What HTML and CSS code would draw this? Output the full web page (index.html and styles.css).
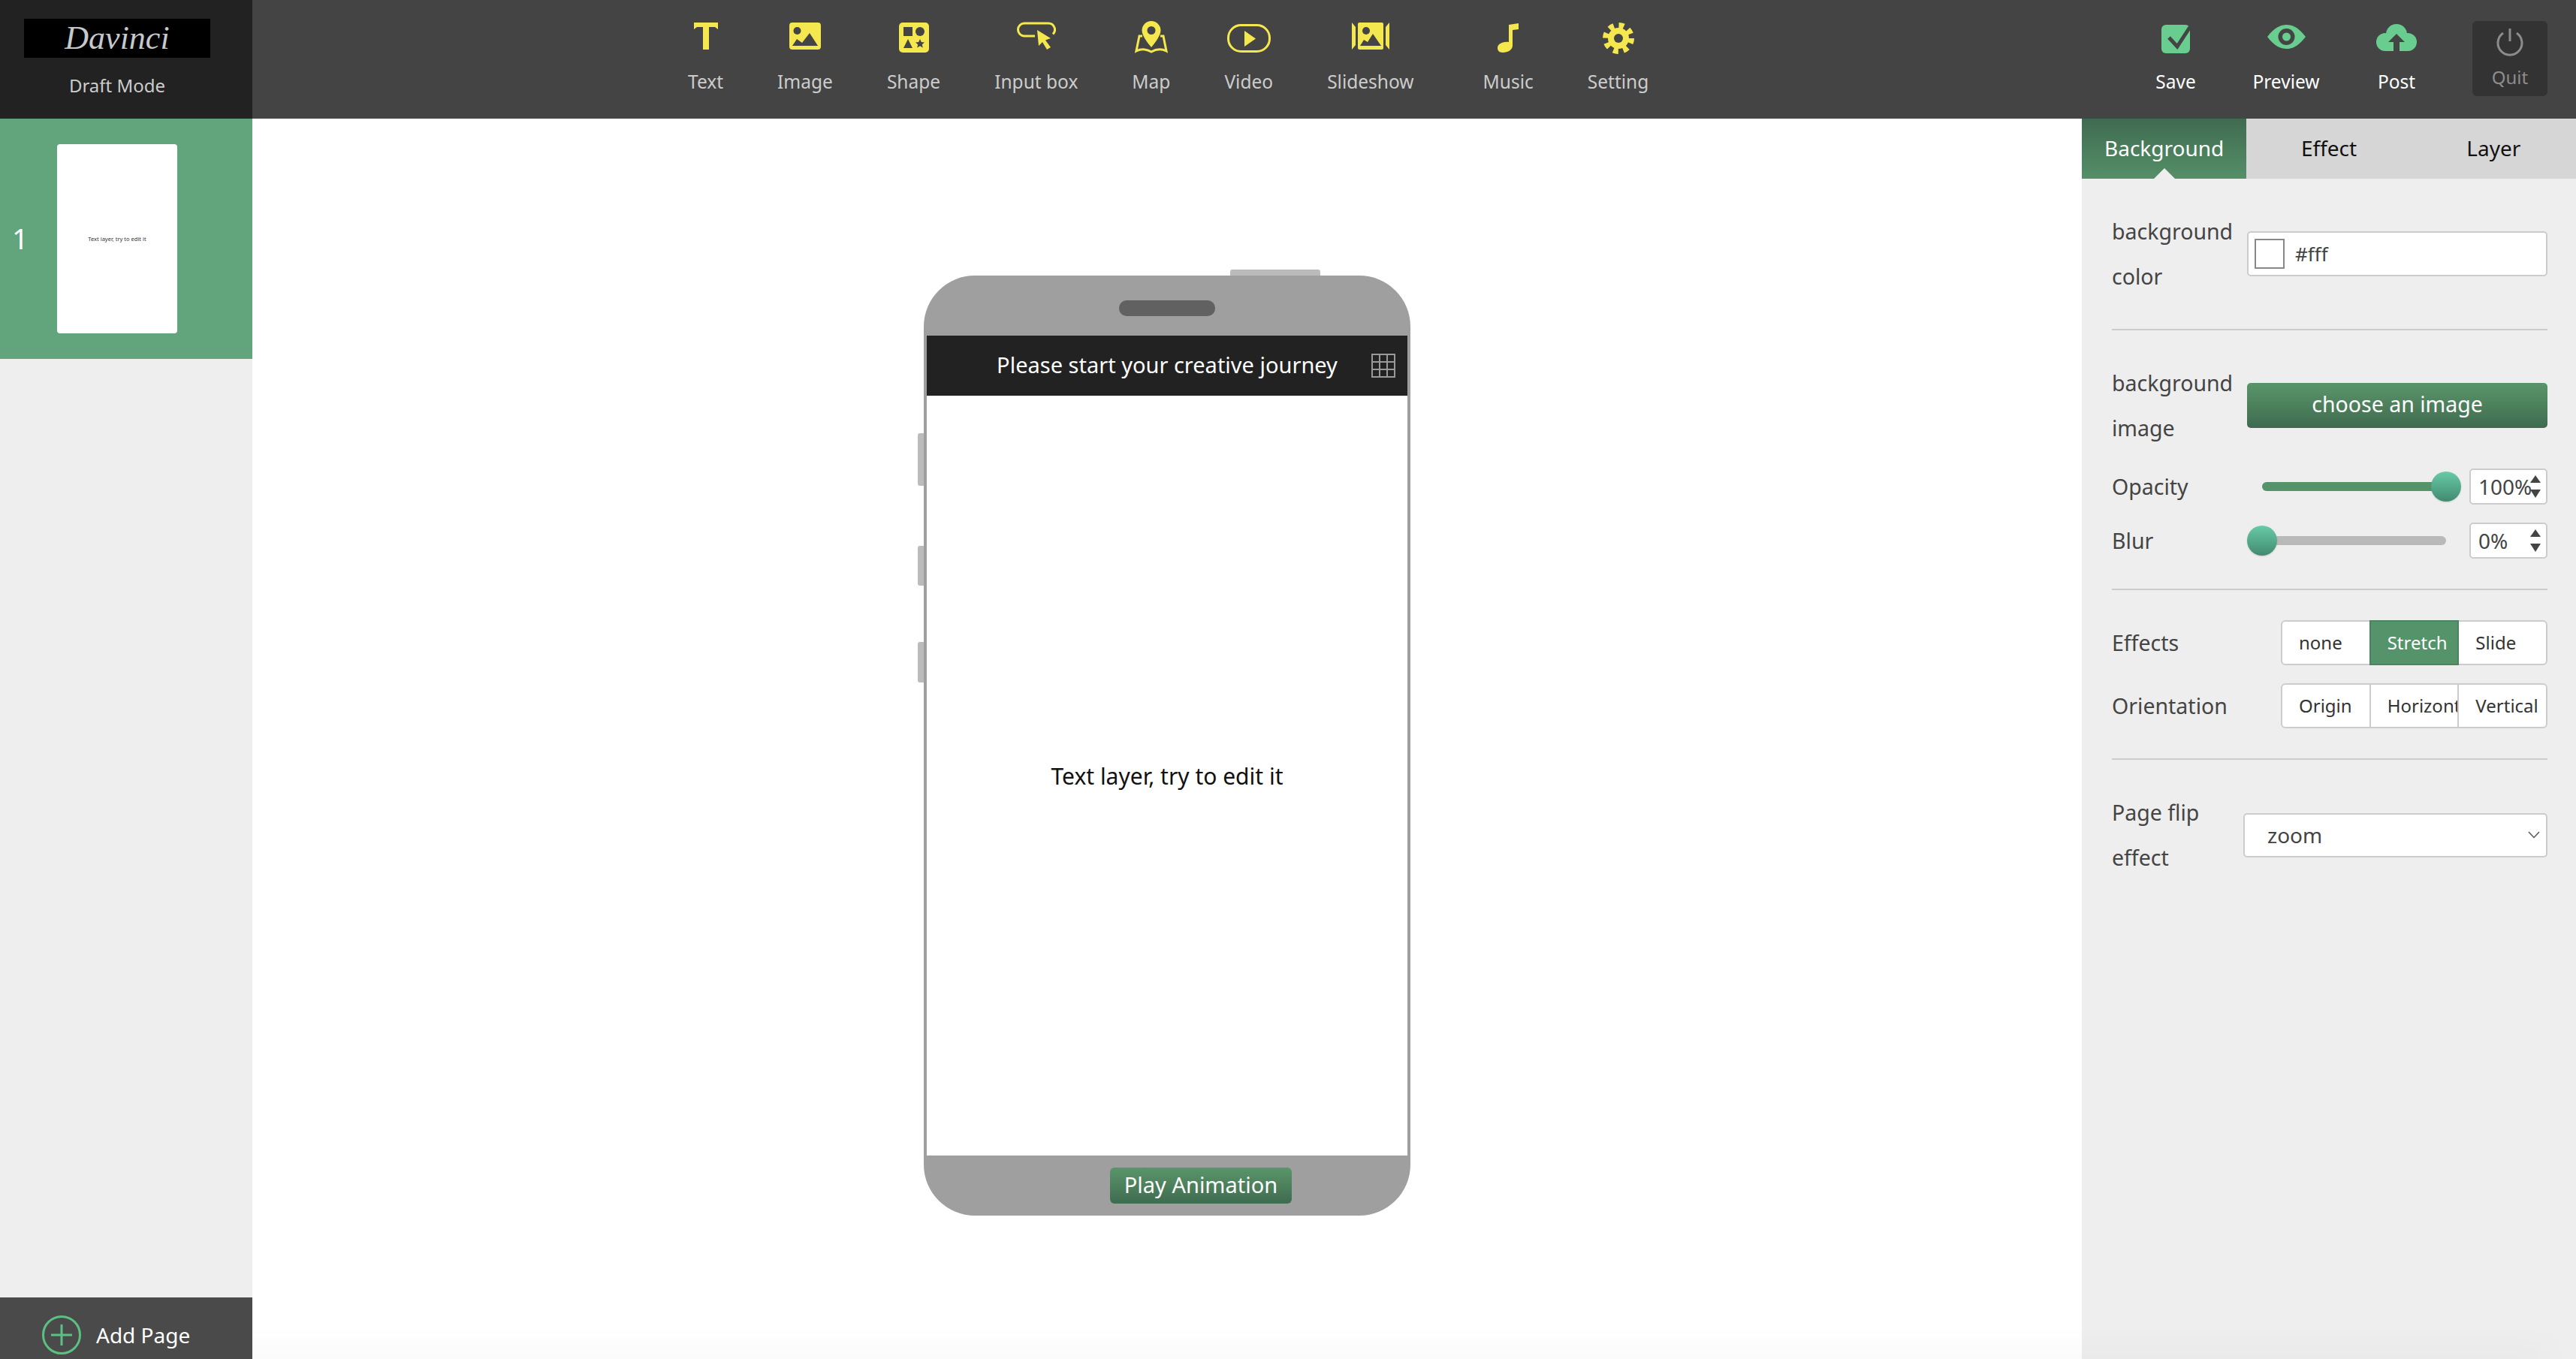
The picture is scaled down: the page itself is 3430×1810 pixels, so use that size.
FILE: index.html
```html
<!DOCTYPE html>
<html lang="en">
<head>
    <meta charset="UTF-8">
    <title>Davinci</title>
    <link rel="stylesheet" href="styles.css">
</head>
<body>
    <header class="topbar">
        <div class="brand">
            <div class="logo">Davinci</div>
            <div class="mode">Draft Mode</div>
        </div>

        <nav class="tools">
            <div class="tool">
                <svg class="icon" width="32" height="44" viewBox="0 0 32 44"><path transform="translate(0,2)" d="M0 0H32V9L28 6H20V36H12V6H4L0 9Z"/></svg>
                <span>Text</span>
            </div>
            <div class="tool">
                <svg class="icon" width="42" height="44" viewBox="0 0 42 44"><g transform="translate(0,2)"><rect width="42" height="36" rx="4"/><circle class="cut" cx="10.5" cy="11" r="5"/><path class="cut" d="M4 31L10 22L17 27L27 14L38 31Z"/></g></svg>
                <span>Image</span>
            </div>
            <div class="tool">
                <svg class="icon" width="40" height="44" viewBox="0 0 40 44"><g transform="translate(0,2)"><rect width="40" height="40" rx="5"/><rect class="cut" x="6" y="6" width="12" height="12"/><circle class="cut" cx="28" cy="12" r="6"/><path class="cut" d="M12 22L18 34H6Z"/><path class="cut" d="M28 22L29.8 26L34 26.4L30.8 29.2L31.8 33.5L28 31.2L24.2 33.5L25.2 29.2L22 26.4L26.2 26Z"/></g></svg>
                <span>Shape</span>
            </div>
            <div class="tool">
                <svg class="icon" width="52" height="44" viewBox="0 0 52 44"><g transform="translate(0,2)"><path class="line" d="M24 18H10a8.5 8.5 0 0 1 0-17H42a8.5 8.5 0 0 1 6 14.5"/><path d="M27 10L45 21L38 23.5L45 33L40 36L34 26L29 31Z"/></g></svg>
                <span>Input box</span>
            </div>
            <div class="tool">
                <svg class="icon" width="44" height="44" viewBox="0 0 44 44"><path fill-rule="evenodd" d="M22 0a12.5 12.5 0 0 1 12.5 12.5C34.500 20 26 30 22 35C18 30 9.500 20 9.500 12.500A12.500 12.500 0 0 1 22 0ZM22 7a5.500 5.500 0 1 0 0 11a5.500 5.500 0 0 0 0-11Z"/><path class="line" d="M10 20H6L2 40C8 37 15 37 22 41C29 37 36 37 42 40L38 20H34"/></svg>
                <span>Map</span>
            </div>
            <div class="tool">
                <svg class="icon" width="58" height="44" viewBox="0 0 58 44"><g transform="translate(0,4)"><rect class="line" x="1.500" y="1.500" width="55" height="35" rx="17"/><path d="M23 9L38 19.500L23 30Z"/></g></svg>
                <span>Video</span>
            </div>
            <div class="tool tool-wide">
                <svg class="icon" width="50" height="44" viewBox="0 0 50 44"><g transform="translate(0,2)"><path d="M0 0L5 6V30L0 36Z"/><path d="M50 0L45 6V30L50 36Z"/><rect x="8" width="34" height="36" rx="2"/><circle class="cut" cx="19" cy="11" r="5"/><path class="cut" d="M11 31L16 23L21 26L28 15L39 31Z"/></g></svg>
                <span>Slideshow</span>
            </div>
            <div class="tool">
                <svg class="icon" width="28" height="44" viewBox="0 0 28 44"><path transform="translate(0,2)" d="M15 3L28 1V9L20 10V31C20 36 14 40 7 40C2 40 0 37 0 34C0 29 6 25 15 26Z"/></svg>
                <span>Music</span>
            </div>
            <div class="tool">
                <svg class="icon" width="42" height="44" viewBox="0 0 42 44"><g transform="translate(0,2)"><circle class="gear-teeth" cx="21" cy="21" r="17"/><circle cx="21" cy="21" r="14"/><circle class="cut" cx="21" cy="21" r="6"/></g></svg>
                <span>Setting</span>
            </div>
        </nav>

        <div class="actions">
            <div class="action">
                <svg class="icon" width="38" height="44" viewBox="0 0 38 44"><g transform="translate(0,5)"><rect width="38" height="38" rx="6"/><path class="check" d="M10 17L21 29L38 3"/></g></svg>
                <span>Save</span>
            </div>
            <div class="action">
                <svg class="icon" width="51" height="44" viewBox="0 0 51 44"><g transform="translate(0,5)"><path d="M0 16C10 3 18 0 25.500 0S41 3 51 16C41 29 33 32 25.500 32S10 29 0 16Z"/><circle class="cut" cx="25.500" cy="16" r="11"/><circle cx="25.500" cy="16" r="5.500"/></g></svg>
                <span>Preview</span>
            </div>
            <div class="action">
                <svg class="icon" width="54" height="44" viewBox="0 0 54 44"><g transform="translate(0,4)"><circle cx="27" cy="14" r="14"/><circle cx="12" cy="24" r="12"/><circle cx="42" cy="24" r="12"/><rect x="12" y="18" width="30" height="18"/><path class="cut" d="M27 13L38 24H31V36H23V24H16Z"/></g></svg>
                <span>Post</span>
            </div>
            <div class="quit">
                <svg width="36" height="38" viewBox="0 0 36 38"><path d="M18 1V18M9 7A16 16 0 1 0 27 7" fill="none" stroke="#8c8c8c" stroke-width="3"/></svg>
                <span>Quit</span>
            </div>
        </div>
    </header>

    <div class="workspace">
        <aside class="pages">
            <div class="page-row">
                <div class="page-num">1</div>
                <div class="page-thumb">Text layer, try to edit it</div>
            </div>
            <div class="add-page">
                <svg width="52" height="52" viewBox="0 0 52 52"><circle cx="26" cy="26" r="24.500" fill="none" stroke="#5cbf84" stroke-width="3"/><path d="M12 26H40M26 12V40" stroke="#5cbf84" stroke-width="3"/></svg>
                <span>Add Page</span>
            </div>
        </aside>

        <main class="canvas">
            <div class="phone">
                <div class="side-btn side-btn-power"></div>
                <div class="side-btn side-btn-a"></div>
                <div class="side-btn side-btn-b"></div>
                <div class="side-btn side-btn-c"></div>
                <div class="phone-top"><div class="speaker"></div></div>
                <div class="phone-title">
                    Please start your creative journey
                    <svg class="grid-icon" width="32" height="32" viewBox="0 0 32 32"><path d="M1 1H31V31H1ZM11 1V31M21 1V31M1 11H31M1 21H31" fill="none" stroke="#999" stroke-width="2"/></svg>
                </div>
                <div class="phone-screen">Text layer, try to edit it</div>
                <div class="phone-bottom"><div class="play-btn">Play Animation</div></div>
            </div>
        </main>

        <aside class="panel">
            <div class="tabs">
                <div class="tab active">Background</div>
                <div class="tab">Effect</div>
                <div class="tab">Layer</div>
            </div>

            <div class="section">
                <div class="row">
                    <label class="label">background color</label>
                    <div class="color-input"><span class="swatch"></span>#fff</div>
                </div>
            </div>

            <div class="section">
                <div class="row">
                    <label class="label">background image</label>
                    <div class="choose-btn">choose an image</div>
                </div>
                <div class="slider-row">
                    <label class="label">Opacity</label>
                    <div class="slider">
                        <div class="track track-on"></div>
                        <div class="thumb thumb-end"></div>
                    </div>
                    <div class="num-input">100%<span class="spin"><i class="up"></i><i class="down"></i></span></div>
                </div>
                <div class="slider-row">
                    <label class="label">Blur</label>
                    <div class="slider">
                        <div class="track"></div>
                        <div class="thumb"></div>
                    </div>
                    <div class="num-input">0%<span class="spin"><i class="up"></i><i class="down"></i></span></div>
                </div>
            </div>

            <div class="section">
                <div class="seg-row">
                    <label class="label">Effects</label>
                    <div class="seg-group">
                        <div class="seg">none</div>
                        <div class="seg on">Stretch</div>
                        <div class="seg">Slide</div>
                    </div>
                </div>
                <div class="seg-row">
                    <label class="label">Orientation</label>
                    <div class="seg-group">
                        <div class="seg">Origin</div>
                        <div class="seg">Horizontal</div>
                        <div class="seg">Vertical</div>
                    </div>
                </div>
            </div>

            <div class="section last">
                <div class="row">
                    <label class="label label-flip">Page flip effect</label>
                    <div class="select">zoom
                        <svg width="16" height="10" viewBox="0 0 16 10"><path d="M1 1L8 8.500L15 1" fill="none" stroke="#555" stroke-width="1.500"/></svg>
                    </div>
                </div>
            </div>
        </aside>
    </div>

    <div class="bottom-shade"></div>
</body>
</html>
```

FILE: styles.css
```css
* {
    box-sizing: border-box;
}

html, body {
    height: 100%;
}

body {
    margin: 0;
    overflow: hidden;
    background: #fff;
    color: #333;
    font-family: "Noto Sans", sans-serif;
    font-size: 26px;
}

.topbar {
    display: flex;
    height: 158px;
    background: #444;
}

.brand {
    width: 336px;
    padding: 25px 56px 0 32px;
    background: #222;
    text-align: center;
}

.logo {
    height: 52px;
    background: #000;
    color: #c5c9cc;
    font-family: "Liberation Serif", serif;
    font-style: italic;
    font-size: 44px;
    line-height: 52px;
}

.mode {
    margin-top: 21px;
    color: #ccc;
    font-size: 24px;
    line-height: 32px;
}

.tools {
    display: flex;
    gap: 72px;
    padding-left: 580px;
}

.tool, .action {
    display: flex;
    flex-direction: column;
    align-items: center;
    padding-top: 28px;
    color: #ccc;
    font-size: 24.5px;
    line-height: 32px;
    white-space: nowrap;
}

.tool .icon {
    fill: #f5e74e;
}

.tool-wide {
    margin-right: 20px;
}

.icon {
    display: block;
    margin-bottom: 21px;
}

.cut {
    fill: #444;
}

.line {
    fill: none;
    stroke: #f5e74e;
    stroke-width: 3;
}

.gear-teeth {
    fill: none;
    stroke: #f5e74e;
    stroke-width: 8;
    stroke-dasharray: 6.700 6.650;
}

.actions {
    display: flex;
    gap: 47px;
    margin-left: auto;
    padding-right: 38px;
}

.action {
    width: 100px;
    color: #fff;
}

.action .icon {
    fill: #69cd90;
}

.check {
    fill: none;
    stroke: #444;
    stroke-width: 5;
}

.quit {
    display: flex;
    flex-direction: column;
    align-items: center;
    width: 100px;
    height: 100px;
    margin: 28px 0 0 4px;
    padding-top: 9px;
    border-radius: 6px;
    background: #333;
    color: #8c8c8c;
    font-size: 24px;
    line-height: 32px;
}

.quit svg {
    margin-bottom: 12px;
}

.workspace {
    display: flex;
    height: 1652px;
}

.pages {
    position: relative;
    z-index: 2;
    display: flex;
    flex-direction: column;
    justify-content: space-between;
    width: 336px;
    background: #eee;
}

.page-row {
    display: grid;
    grid-template-columns: 76px 160px;
    align-items: center;
    height: 320px;
    background: #62a47c;
}

.page-num {
    padding: 0 0 2px 16px;
    color: #fff;
    font-size: 38px;
}

.page-thumb {
    display: flex;
    align-items: center;
    justify-content: center;
    height: 252px;
    border-radius: 4px;
    background: #fff;
    color: #333;
    font-size: 7.5px;
}

.add-page {
    display: flex;
    align-items: center;
    gap: 20px;
    height: 82px;
    padding: 18px 0 0 56px;
    background: #4a4a4a;
    color: #fff;
    font-size: 28px;
    line-height: 52px;
}

.add-page svg {
    flex: none;
}

.canvas {
    flex: 1;
    display: flex;
    justify-content: center;
    padding-top: 209px;
}

.phone {
    position: relative;
    display: flex;
    flex-direction: column;
    width: 648px;
    height: 1252px;
    border-radius: 68px;
    background: #9f9f9f;
}

.side-btn {
    position: absolute;
    left: -8px;
    width: 8px;
    border-radius: 3px 0 0 3px;
    background: #bbb;
}

.side-btn-a {
    top: 210px;
    height: 70px;
}

.side-btn-b {
    top: 360px;
    height: 53px;
}

.side-btn-c {
    top: 488px;
    height: 54px;
}

.side-btn-power {
    top: -8px;
    left: 408px;
    width: 120px;
    height: 8px;
    border-radius: 3px 3px 0 0;
}

.phone-top {
    display: flex;
    justify-content: center;
    height: 80px;
    padding-top: 33px;
}

.speaker {
    width: 128px;
    height: 21px;
    border-radius: 10px;
    background: #616161;
}

.phone-title {
    position: relative;
    height: 80px;
    margin: 0 4px;
    background: #222;
    color: #fff;
    font-size: 29px;
    line-height: 78px;
    text-align: center;
}

.grid-icon {
    position: absolute;
    top: 24px;
    right: 16px;
}

.phone-screen {
    flex: 1;
    display: flex;
    align-items: center;
    justify-content: center;
    margin: 0 4px;
    background: #fff;
    color: #111;
    font-size: 30px;
}

.phone-bottom {
    height: 80px;
    padding: 16px 0 0 248px;
}

.play-btn {
    width: 242px;
    height: 48px;
    border-radius: 6px;
    background: linear-gradient(#5a9569, #3f6b50);
    color: #fff;
    font-size: 29px;
    line-height: 46px;
    text-align: center;
}

.panel {
    width: 658px;
    background: #eee;
    color: #444;
}

.tabs {
    display: flex;
    height: 80px;
}

.tab {
    position: relative;
    flex: 1;
    background: #d6d6d6;
    color: #111;
    font-size: 28px;
    line-height: 78px;
    text-align: center;
}

.tab.active {
    background: linear-gradient(#3f6b50, #558f68);
    color: #fff;
}

.tab.active::after {
    content: "";
    position: absolute;
    left: 50%;
    bottom: 0;
    margin-left: -14px;
    border: 14px solid transparent;
    border-top: 0;
    border-bottom-color: #eee;
}

.section {
    margin: 0 38px 0 40px;
    padding: 40px 0;
    border-bottom: 2px solid #ccc;
}

.section.last {
    border-bottom: 0;
}

.label {
    font-size: 28.5px;
    line-height: 60px;
}

.row {
    display: grid;
    grid-template-columns: 180px 1fr;
    align-items: center;
}

.color-input {
    display: flex;
    align-items: center;
    height: 60px;
    padding-left: 8px;
    border: 2px solid #ccc;
    border-radius: 5px;
    background: #fff;
    font-size: 26px;
}

.swatch {
    width: 40px;
    height: 40px;
    margin-right: 14px;
    border: 2px solid #888;
    background: #fff;
}

.choose-btn {
    height: 60px;
    border-radius: 5px;
    background: linear-gradient(#5a9569, #3f6b50);
    color: #fff;
    font-size: 28.5px;
    line-height: 56px;
    text-align: center;
}

.slider-row {
    display: flex;
    align-items: center;
    height: 48px;
    margin-top: 24px;
}

.slider-row .label {
    width: 180px;
}

.slider {
    position: relative;
    width: 285px;
    height: 40px;
    margin-right: 11px;
}

.track {
    position: absolute;
    top: 14px;
    left: 20px;
    right: 20px;
    height: 12px;
    border-radius: 6px;
    background: #b9b9b9;
}

.track-on {
    background: #55946a;
}

.thumb {
    position: absolute;
    top: 0;
    left: 0;
    width: 40px;
    height: 40px;
    border-radius: 50%;
    background: linear-gradient(#68cba8, #418a70);
    box-shadow: 0 1px 2px rgba(0, 0, 0, .15);
}

.thumb-end {
    left: 245px;
}

.num-input {
    position: relative;
    width: 104px;
    height: 48px;
    padding-left: 10px;
    border: 2px solid #ccc;
    border-radius: 5px;
    background: #fff;
    font-size: 28px;
    line-height: 44px;
}

.spin {
    position: absolute;
    top: 7px;
    right: 7px;
    display: flex;
    flex-direction: column;
    gap: 9px;
}

.spin i {
    display: block;
    border: 7px solid transparent;
}

.spin .up {
    border-top: 0;
    border-bottom: 10px solid #444;
}

.spin .down {
    border-bottom: 0;
    border-top: 11px solid #444;
}

.seg-row {
    display: flex;
    align-items: center;
    justify-content: space-between;
    height: 60px;
}

.seg-row + .seg-row {
    margin-top: 24px;
}

.seg-group {
    display: flex;
    width: 355px;
    height: 60px;
}

.seg {
    flex: 1;
    min-width: 0;
    margin-left: -2px;
    padding-left: 22px;
    overflow: hidden;
    border: 2px solid #ccc;
    background: #fff;
    color: #333;
    font-size: 24px;
    line-height: 56px;
    white-space: nowrap;
}

.seg:first-child {
    margin-left: 0;
    border-radius: 6px 0 0 6px;
}

.seg:last-child {
    border-radius: 0 6px 6px 0;
}

.seg.on {
    position: relative;
    border-color: #4a8560;
    background: #55946a;
    color: #fff;
}

.label-flip {
    width: 140px;
}

.select {
    display: flex;
    align-items: center;
    justify-content: space-between;
    height: 59px;
    margin-left: -5px;
    padding: 0 8px 0 30px;
    border: 2px solid #ccc;
    border-radius: 5px;
    background: #fff;
    font-size: 28px;
}

.bottom-shade {
    position: absolute;
    left: 100px;
    right: 40px;
    bottom: 0;
    z-index: 1;
    height: 0;
    box-shadow: 0 0 45px 5px rgba(0, 0, 0, .09);
}
```
